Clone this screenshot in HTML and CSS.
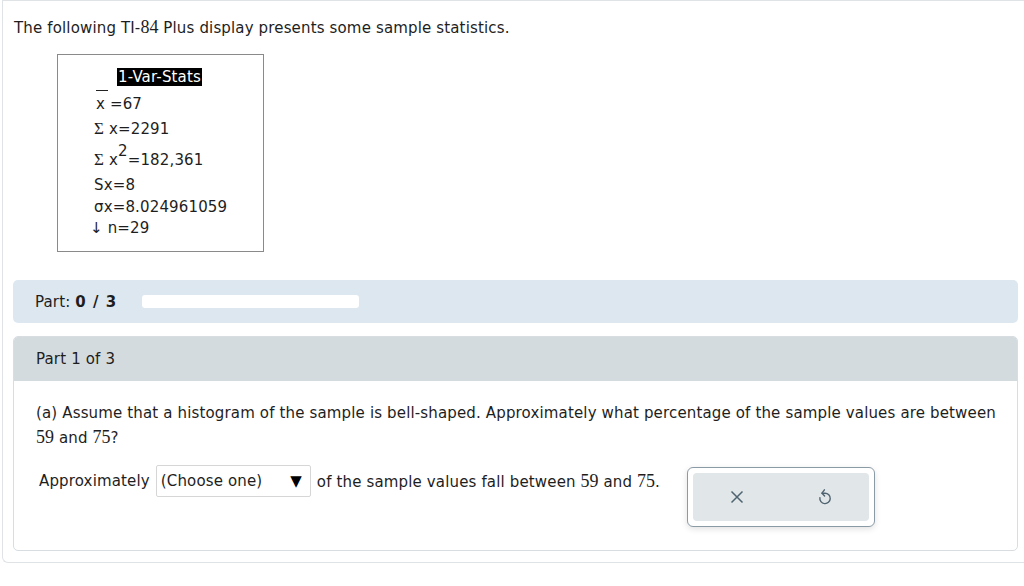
FILE: index.html
```html
<!DOCTYPE html>
<html>
<head>
<meta charset="utf-8">
<link rel="stylesheet" href="styles.css">
</head>
<body>
<div class="page">
  <p class="intro">The following TI-<span class="num">84</span> Plus display presents some sample statistics.</p>
  <div class="ti">
    <div class="ti-title"><span>1-Var-Stats</span></div>
    <div class="ti-line xbar"><span class="bar">x</span> =67</div>
    <div class="ti-line l2"><span class="sig">Σ</span> x=2291</div>
    <div class="ti-line sq"><span class="sig">Σ</span> x<sup>2</sup>=182,361</div>
    <div class="ti-line l4">Sx=8</div>
    <div class="ti-line sm">σx=8.024961059</div>
    <div class="ti-line sm arrow">↓ n=29</div>
  </div>
  <div class="partbar">
    <span>Part: <b>0 / 3</b></span>
    <div class="progress"></div>
  </div>
  <div class="card">
    <div class="card-head">Part 1 of 3</div>
    <div class="card-body">
      <p class="q">(a) Assume that a histogram of the sample is bell-shaped. Approximately what percentage of the sample values are between <span class="num">59</span> and <span class="num">75</span>?</p>
      <div class="answer">
        <div class="sentence">
          <span>Approximately</span>
          <div class="select"><span>(Choose one)</span><span class="tri">▼</span></div>
          <span>of the sample values fall between <span class="num">59</span> and <span class="num">75</span>.</span>
        </div>
        <div class="tools">
          <div class="tools-inner">
            <svg width="16" height="16" viewBox="0 0 16 16"><path d="M2.5 2.5 L13.5 13.5 M13.5 2.5 L2.5 13.5" stroke="#4f6470" stroke-width="1.5" fill="none"/></svg>
            <svg width="16" height="18" viewBox="0 0 16 18"><path d="M5 5.2 L8 5.2 A5.2 5.2 0 1 1 2.9 9.6" stroke="#4f6470" stroke-width="1.4" fill="none" stroke-linecap="round"/><path d="M7.4 1.8 L5 5.2 L7.6 8" stroke="#4f6470" stroke-width="1.4" fill="none" stroke-linecap="round" stroke-linejoin="round"/></svg>
          </div>
        </div>
      </div>
    </div>
  </div>
</div>
</body>
</html>
```

FILE: styles.css
```css
html, body { margin: 0; padding: 0; background: #fff; }
body { font-family: "DejaVu Sans", Verdana, sans-serif; font-size: 15px; letter-spacing: 0.15px; color: #1e1e1e; }
.page {
  margin-left: 2px;
  width: 1040px;
  height: 563px;
  box-sizing: border-box;
  border: 1px solid #dfe3e6;
  border-right: none;
  border-radius: 0 0 0 6px;
  padding: 0 0 0 10px;
}
.num { font-family: "Liberation Serif", "Times New Roman", serif; font-size: 18px; letter-spacing: 0; }
.intro { margin: 16px 0 0 1px; line-height: 20px; }
.ti {
  margin: 16px 0 0 44px;
  width: 207px;
  height: 198px;
  box-sizing: border-box;
  border: 1px solid #8a8a8a;
  padding: 13px 0 0 36px;
}
.ti-title { padding-left: 23px; height: 19px; }
.ti-title span { background: #000; color: #fff; padding: 0 1px; line-height: 18px; display: inline-block; }
.ti-line { line-height: 20px; white-space: pre; }
.xbar { padding-top: 7px; height: 23px; padding-left: 2px; }
.l2 { padding-top: 2px; height: 23px; }
.sq { padding-top: 8px; height: 23px; }
.l4 { padding-top: 2px; height: 22px; }
.sm { height: 21px; }
.bar { display: inline-block; position: relative; }
.bar::before { content: ""; position: absolute; left: 0; top: -4px; width: 12px; border-top: 1px solid #222; }
.sig { font-family: "Liberation Serif", serif; font-size: 17px; }
.sq sup { font-size: 15px; vertical-align: baseline; position: relative; top: -9px; line-height: 0; }
.arrow { margin-left: -4px; }
.partbar {
  margin-top: 28px;
  width: 1005px;
  height: 43px;
  box-sizing: border-box;
  background: #dde7ef;
  border-radius: 5px;
  display: flex;
  align-items: center;
  padding-left: 22px;
  gap: 25px;
}
.partbar b { letter-spacing: 1px; }
.progress { width: 217px; height: 13px; background: #fff; border-radius: 3px; }
.card {
  margin-top: 13px;
  width: 1005px;
  height: 215px;
  box-sizing: border-box;
  border: 1px solid #d7dde1;
  border-radius: 5px;
  overflow: hidden;
}
.card-head { background: #d4dbdf; height: 44px; padding-left: 22px; display: flex; align-items: center; }
.card-body { padding: 20px 0 0 22px; }
.q { margin: 0; line-height: 24px; width: 970px; }
.answer { display: flex; margin-top: 15px; align-items: flex-start; }
.sentence { display: flex; align-items: center; gap: 6px; height: 32px; margin-left: 3px; }
.select {
  width: 155px; height: 32px; box-sizing: border-box;
  border: 1px solid #d6d6d6; border-radius: 2px;
  display: flex; align-items: center; justify-content: space-between;
  padding: 0 8px 0 4px;
}
.tri { font-size: 15px; color: #000; }
.tools {
  margin-left: 27px; margin-top: 2px;
  width: 188px; height: 60px; box-sizing: border-box;
  border: 1px solid #8b9ba6; border-radius: 6px;
  background: #fff; padding: 5px;
  box-shadow: 0 2px 6px rgba(0,0,0,0.12);
}
.tools-inner {
  height: 100%; background: #e1e6e9; border-radius: 4px;
  display: flex; align-items: center; justify-content: center; gap: 72px;
}
```
